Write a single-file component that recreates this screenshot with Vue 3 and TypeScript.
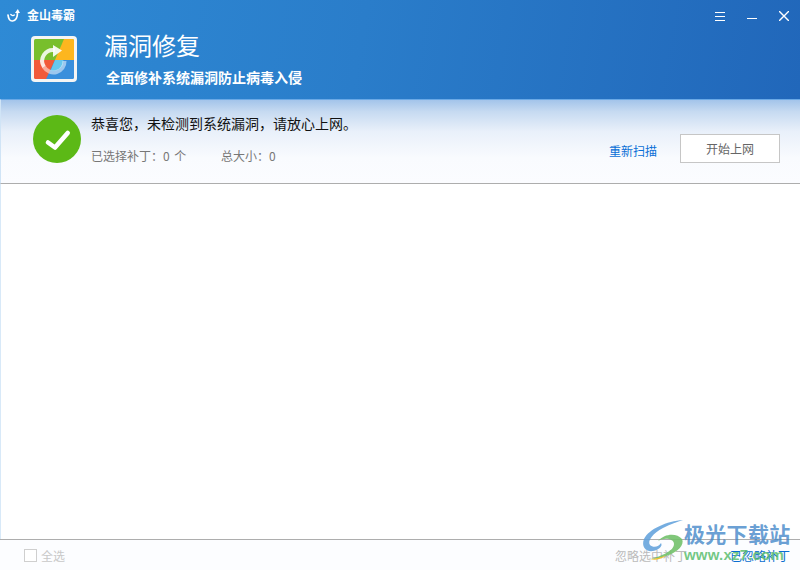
<script setup lang="ts">
const title = '漏洞修复'
</script>

<template>
  <div class="win">
    <header class="head">
      <div class="bar">
        <div class="brand">
          <svg class="mark" width="16" height="16" viewBox="0 0 16 16">
            <path d="M2 8 C2.500 12 4.500 14.200 6.500 14 C10 13.700 11.500 10 11.500 5.500" fill="none" stroke="#fff" stroke-width="1.7" stroke-linecap="round" />
            <path d="M4.800 7.500 C6 8.800 7.500 8.800 8.300 8" fill="none" stroke="#fff" stroke-width="1.300" stroke-linecap="round" />
            <path d="M9 6 L11.800 2 L14 6 Z" fill="#fff" />
          </svg>
          <span class="name">金山毒霸</span>
        </div>
        <div class="ctrls">
          <svg width="10" height="10" viewBox="0 0 10 10"><path d="M0 1.500H10M0 5.500H10M0 9.500H10" stroke="#fff" stroke-width="1" /></svg>
          <svg width="10" height="10" viewBox="0 0 10 10"><path d="M0 7.500H10" stroke="#fff" stroke-width="1" /></svg>
          <svg width="10" height="10" viewBox="0 0 10 10"><path d="M0 0L10 10M10 0L0 10" stroke="#fff" stroke-width="1.400" /></svg>
        </div>
      </div>
      <div class="hero">
        <svg class="appicon" width="46" height="46" viewBox="0 0 46 46">
          <defs>
            <clipPath id="inner"><rect x="3" y="3" width="40" height="40" rx="1.500" /></clipPath>
            <clipPath id="ring"><circle cx="22.500" cy="25" r="10" /></clipPath>
          </defs>
          <rect x="0" y="0" width="46" height="46" rx="4" fill="#f5f5f4" />
          <g clip-path="url(#inner)">
            <rect x="3" y="3" width="40" height="21" fill="#78bf2c" />
            <polygon points="33,3 43,3 43,24 24,24" fill="#fdb61f" />
            <rect x="3" y="24" width="22" height="19" fill="#f2593a" />
            <polygon points="24,24 43,24 43,43 15,43" fill="#3a8fdc" />
            <polygon points="24,24 34,24 34,36 19,36" fill="#67c7ee" clip-path="url(#ring)" />
          </g>
          <path d="M24 14.100 A11 11 0 0 0 13 31" fill="none" stroke="#fff" stroke-opacity=".85" stroke-width="4" />
          <path d="M13 31 A11 11 0 0 0 33.500 25" fill="none" stroke="#fff" stroke-opacity=".5" stroke-width="4" />
          <polygon points="22,9 31,14.500 22,21" fill="#fff" fill-opacity=".9" />
        </svg>
        <div class="herotext">
          <h1 class="title">{{ title }}</h1>
          <p class="sub">全面修补系统漏洞防止病毒入侵</p>
        </div>
      </div>
    </header>

    <section class="status">
      <svg class="ok" width="48" height="48" viewBox="0 0 48 48">
        <circle cx="24" cy="24" r="24" fill="#5cb916" />
        <path d="M15 27.500 L22 32.500 L34.700 18" fill="none" stroke="#fff" stroke-width="4.600" stroke-linecap="round" stroke-linejoin="round" />
      </svg>
      <div class="msg">
        <p class="line">恭喜您，未检测到系统漏洞，请放心上网。</p>
        <p class="meta">
          <span class="m1">已选择补丁：0 个</span>
          <span>总大小：0</span>
        </p>
      </div>
      <div class="acts">
        <a class="rescan">重新扫描</a>
        <button class="go">开始上网</button>
      </div>
    </section>

    <main class="list"></main>

    <footer class="foot">
      <label class="all"><i class="box"></i><span>全选</span></label>
      <div class="right">
        <span class="ign">忽略选中补丁</span>
        <span class="done">已忽略补丁</span>
      </div>
    </footer>

    <div class="wm">
      <svg class="swirl" width="46" height="44" viewBox="0 0 46 44">
        <path d="M42 1 C26 2 8 10 3 20 C0 28 5 33 12 32 C18 31 22 27 20 24 C18 28 12 29 9 26 C6 22 12 14 22 9 C30 5 36 3 42 1 Z" fill="#62a2dc" opacity=".88" />
        <path d="M17 22 C24 14 36 14 41 20 C44 26 36 33 28 36 C22 38 16 40 10 40 C20 37 33 32 33 25 C33 20 24 18 17 22 Z" fill="#72c16c" opacity=".9" />
        <path d="M9 40 C15 40 20 38 25 36.500 C21 40 14 42 9 40 Z" fill="#f0c030" />
      </svg>
      <div class="wmtext">
        <div class="wmcn">极光下载站</div>
        <div class="wmen">www.xz7.com</div>
      </div>
    </div>
  </div>
</template>

<style>
html, body { margin: 0; padding: 0; background: #fff; }
</style>

<style scoped>
.win {
  position: relative;
  width: 800px;
  height: 570px;
  overflow: hidden;
  display: flex;
  flex-direction: column;
  font-family: "Noto Sans CJK SC", "Liberation Sans", sans-serif;
  background: #fff;
}
.head {
  height: 99px;
  flex: none;
  box-sizing: border-box;
  background: linear-gradient(100deg, #2e8ad5 0%, #2a7dca 45%, #2167ba 100%);
  color: #fff;
}
.bar {
  height: 30px;
  box-sizing: border-box;
  display: flex;
  justify-content: space-between;
  align-items: center;
  padding: 0 11px 2px 6px;
}
.brand { display: flex; align-items: center; gap: 5px; }
.mark { margin-top: 1px; }
.name { font-size: 12px; font-weight: 700; }
.ctrls {
  display: flex;
  gap: 22px;
  align-self: flex-start;
  margin-top: 11px;
}
.hero {
  display: flex;
  align-items: flex-start;
  padding: 6px 0 0 31px;
  gap: 27px;
}
.appicon { display: block; }
.herotext { margin-top: -8px; }
.title {
  margin: 0;
  font-size: 24px;
  font-weight: 400;
  line-height: 34px;
}
.sub {
  margin: 5px 0 0 2px;
  font-size: 14px;
  line-height: 20px;
  font-weight: 700;
}
.status {
  height: 85px;
  flex: none;
  box-sizing: border-box;
  display: flex;
  align-items: flex-start;
  padding: 15px 20px 0 32px;
  background: linear-gradient(180deg, #a3c4ea 0%, #c6daf1 14%, #e9f0fa 38%, #f9fbfe 70%, #fbfcff 100%);
  border-bottom: 1px solid #adadad;
  border-top: 1px solid #6aa9e6;
  border-left: 1px solid #d0e4f6;
}
.ok { flex: none; }
.msg { margin-left: 10px; flex: 1; }
.line {
  margin: -2px 0 0;
  font-size: 14px;
  line-height: 20px;
  color: #111;
}
.meta {
  margin: 14px 0 0;
  font-size: 12px;
  line-height: 18px;
  color: #777;
  display: flex;
  word-spacing: 2px;
}
.m1 { width: 130px; }
.acts {
  display: flex;
  align-items: center;
  gap: 23px;
  margin-top: 19px;
}
.rescan { font-size: 12px; color: #0a6fd6; margin-top: 3px; }
.go {
  width: 100px;
  height: 29px;
  padding: 0;
  background: #fff;
  border: 1px solid #c6c6c6;
  font: inherit;
  font-size: 12px;
  color: #666;
}
.list {
  flex: 1;
  background: #fff;
  border-left: 1px solid #d8e9f8;
}
.foot {
  height: 31px;
  flex: none;
  box-sizing: border-box;
  display: flex;
  justify-content: space-between;
  align-items: center;
  padding: 0 10px 0 24px;
  border-top: 1px solid #adadad;
  background: #fcfdff;
  font-size: 12px;
}
.all { display: flex; align-items: center; gap: 4px; color: #c8c8c8; }
.box {
  display: block;
  width: 11px;
  height: 11px;
  border: 1px solid #cfcfcf;
  background: #fff;
}
.right { display: flex; gap: 43px; }
.ign { color: #bbb; }
.done { color: #0a6ed0; }
.wm {
  position: absolute;
  left: 641px;
  top: 519px;
  display: flex;
  pointer-events: none;
}
.wmtext { margin-left: -3px; }
.wmcn {
  font-size: 21px;
  line-height: 28px;
  font-weight: 700;
  letter-spacing: .3px;
  color: rgba(66, 134, 200, .8);
}
.wmen {
  font-family: "Liberation Sans", sans-serif;
  font-size: 15px;
  line-height: 16px;
  font-weight: 700;
  letter-spacing: .2px;
  color: rgba(90, 190, 110, .85);
}
</style>
